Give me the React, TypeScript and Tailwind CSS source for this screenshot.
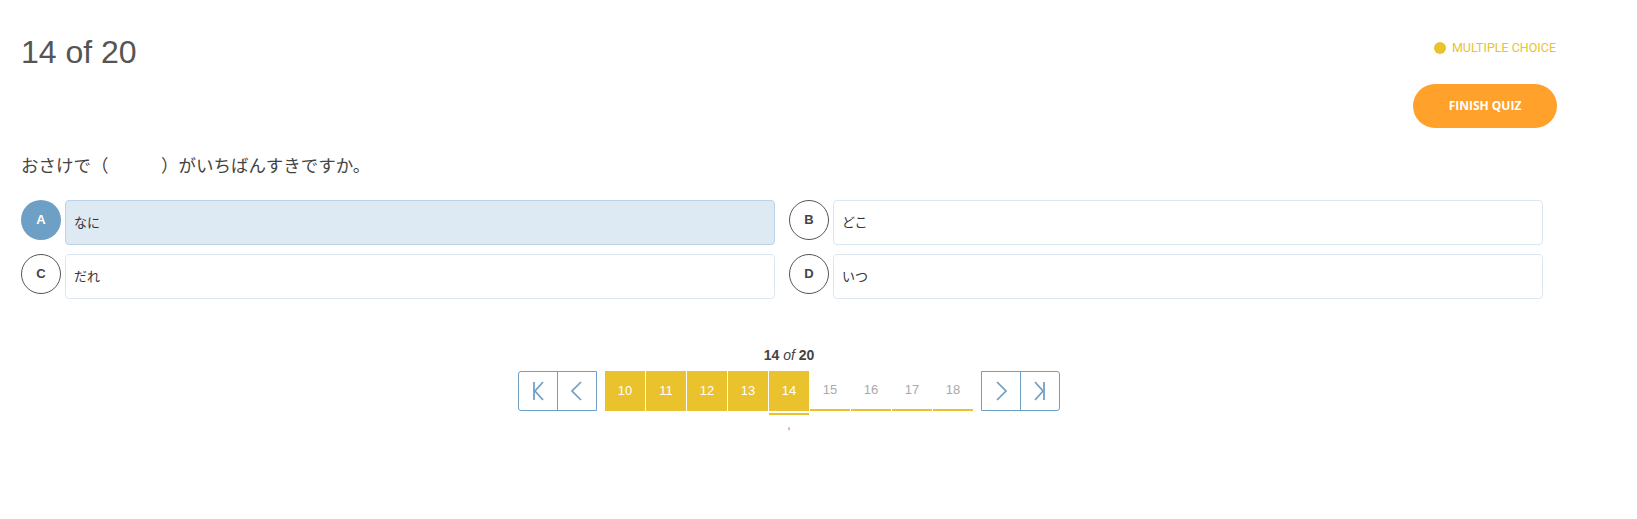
import { Fragment } from 'react'

const jp = "font-['Liberation_Sans','Noto_Sans_CJK_JP',sans-serif]"

const options = [
  { key: 'A', text: 'なに', selected: true },
  { key: 'B', text: 'どこ', selected: false },
  { key: 'C', text: 'だれ', selected: false },
  { key: 'D', text: 'いつ', selected: false },
]

function Option({ letter, text, selected }: { letter: string; text: string; selected: boolean }) {
  return (
    <div className="flex items-start gap-[4px] pr-[14px]">
      <div
        className={
          selected
            ? 'w-10 h-10 shrink-0 rounded-full bg-[#6e9fc5] text-white flex items-center justify-center text-[13px] font-bold'
            : 'w-10 h-10 shrink-0 rounded-full border border-[#555] bg-white text-[#444] flex items-center justify-center text-[13px] font-bold'
        }
      >
        {letter}
      </div>
      <div
        className={
          selected
            ? 'flex-1 h-[45px] rounded-[4px] border border-[#bcd3e7] bg-[#dde9f3] flex items-center pl-[8px] text-[13px] text-[#333]'
            : 'flex-1 h-[45px] rounded-[4px] border border-[#dbe6f1] bg-white flex items-center pl-[8px] text-[13px] text-[#333]'
        }
      >
        {text}
      </div>
    </div>
  )
}

const Icon = ({ d }: { d: string }) => (
  <svg width="20" height="20" viewBox="0 0 20 20" fill="none" stroke="#6e9fc5" strokeWidth="1.75">
    <path d={d} />
  </svg>
)

export default function App() {
  const pages = [10, 11, 12, 13, 14, 15, 16, 17, 18]
  const current = 14

  return (
    <div className={`min-h-screen bg-white pl-[21px] ${jp}`}>
      <div className="w-[1536px]">
        {/* header */}
        <div className="flex justify-between items-start">
          <h1 className="mt-[33px] text-[32px] leading-[38px] text-[#555]">14 of 20</h1>
          <div className="flex flex-col items-end">
            <div className="mt-[40px] h-4 flex items-center gap-[6px] pr-px">
              <span className="w-3 h-3 rounded-full bg-[#e9c22e]" />
              <span className="text-[12.5px] text-[#e9c22e] font-['Roboto',sans-serif]">MULTIPLE CHOICE</span>
            </div>
            <button className="mt-[28px] w-[144px] h-[44px] rounded-full bg-[#ffa12b] text-white text-[12px] font-bold font-['Open_Sans',sans-serif]">
              FINISH QUIZ
            </button>
          </div>
        </div>

        {/* question */}
        <p className="mt-[26px] text-[17.5px] leading-6 text-[#444]">おさけで（　　　）がいちばんすきですか。</p>

        <div className="mt-[22px] grid grid-cols-2 gap-y-[9px]">
          {options.map(o => (
            <Option key={o.key} letter={o.key} text={o.text} selected={o.selected} />
          ))}
        </div>

        {/* pagination */}
        <div className="mt-[48px] flex flex-col items-center">
          <div className="text-[14px] leading-4 font-bold text-[#444] font-['Liberation_Sans',sans-serif]">
            14 <span className="italic font-normal">of</span> 20
          </div>
          <div className="mt-[8px] flex items-start">
            <div className="flex h-10 border border-[#6e9fc5] rounded-l-[3px]">
              <button className="w-[39px] flex items-center justify-center border-r border-[#6e9fc5]">
                <Icon d="M6 1v18M15 1 7 10l8 9" />
              </button>
              <button className="w-[38px] flex items-center justify-center">
                <Icon d="M14 1 5 10l9 9" />
              </button>
            </div>
            <div className="ml-[8px] flex items-start gap-px">
              {pages.map(p => (
                <Fragment key={p}>
                  {p < current && (
                    <div className="w-10 h-10 bg-[#e9c22e] text-white text-[13px] flex items-center justify-center">{p}</div>
                  )}
                  {p === current && (
                    <div className="w-10 flex flex-col items-center">
                      <div className="w-10 h-10 bg-[#e9c22e] text-white text-[13px] flex items-center justify-center">{p}</div>
                      <div className="mt-[2px] w-10 h-[2px] bg-[#e9c22e]" />
                      <div className="mt-[4px] text-[12px] leading-3 text-[#888]">,</div>
                    </div>
                  )}
                  {p > current && (
                    <div className="w-10 h-10 border-b-2 border-[#e9c22e] text-[#aaa] text-[13px] flex items-center justify-center">{p}</div>
                  )}
                </Fragment>
              ))}
            </div>
            <div className="ml-[8px] flex h-10 border border-[#6e9fc5] rounded-r-[3px]">
              <button className="w-[39px] flex items-center justify-center border-r border-[#6e9fc5]">
                <Icon d="M6 1l9 9-9 9" />
              </button>
              <button className="w-[38px] flex items-center justify-center">
                <Icon d="M14 1v18M5 1l8 9-8 9" />
              </button>
            </div>
          </div>
        </div>
      </div>
    </div>
  )
}
